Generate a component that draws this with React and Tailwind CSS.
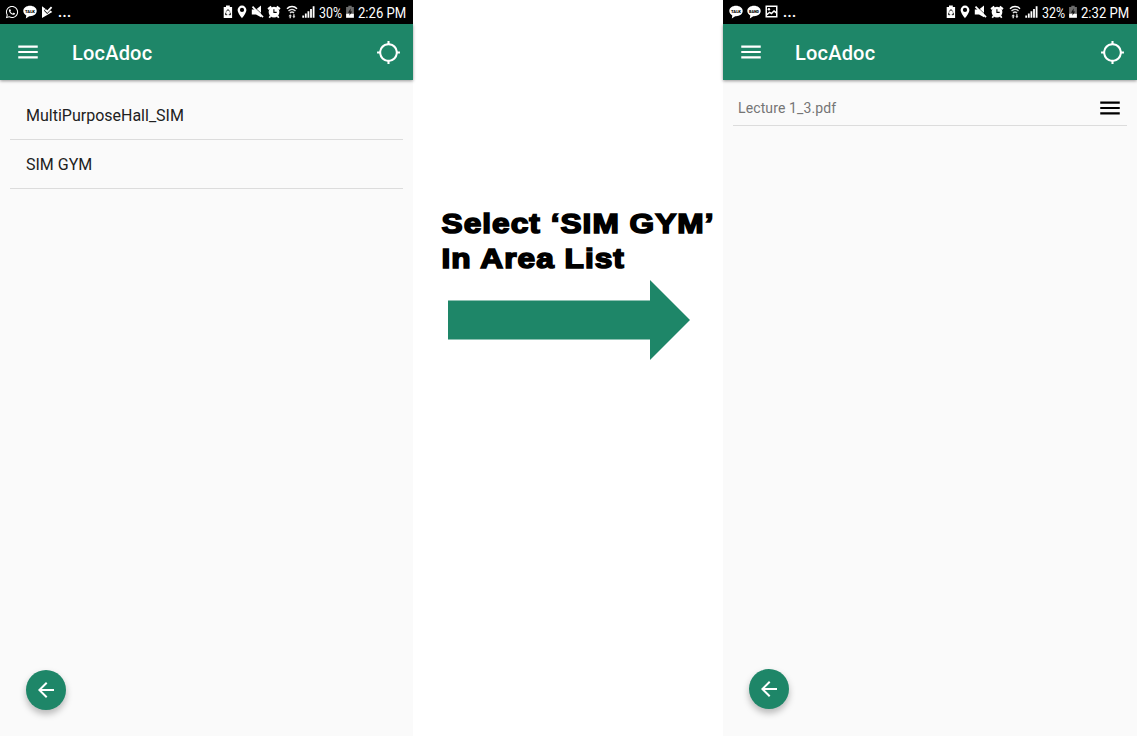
import React from 'react';
import { FaWhatsapp } from 'react-icons/fa';
import { MdGpsNotFixed, MdMenu, MdArrowBack } from 'react-icons/md';

function ChatBubble({ label }) {
  return (
    <svg className="h-[14px] w-[14px] shrink-0" viewBox="0 0 14 14">
      <path d="M7 .8C3.3.8.3 3 .3 6c0 1.9 1.2 3.5 3 4.4L2.8 13.4 6.2 11.2H7c3.7 0 6.7-2.2 6.7-5.2S10.7.8 7 .8Z" fill="#fff" />
      <text x="7" y="7.8" fontSize="4.4" fontWeight="900" textAnchor="middle" textLength="10" lengthAdjust="spacingAndGlyphs" fontFamily="Roboto, sans-serif" fill="#000">
        {label}
      </text>
    </svg>
  );
}

function PlayCheck() {
  return (
    <svg className="h-[14px] w-[12px] shrink-0" viewBox="0 0 12 14">
      <path d="M1 1.300V13L11.300 7 9.400 5.600 6.200 8.900 3 5.800 4.400 3.700Z" fill="#fff" />
      <path d="M4.300 4.700 6.300 6.700 10.600 2.200" fill="none" stroke="#fff" strokeWidth="1.800" />
    </svg>
  );
}

function Picture() {
  return (
    <svg className="h-[14px] w-[13px] shrink-0" viewBox="0 0 13 14">
      <rect x="1.25" y="1.25" width="10.5" height="10.5" fill="none" stroke="#fff" strokeWidth="1.5" />
      <circle cx="3.9" cy="4.200" r="1.200" fill="#fff" />
      <path d="M2 8.600 4.500 6.500l1.900 1L9 5l2 1.500v2L9 7 6.600 9.400 4.600 8.300 2 10.400Z" fill="#fff" />
    </svg>
  );
}

function RecycleBattery() {
  return (
    <svg className="h-[14px] w-[10px] shrink-0" viewBox="0 0 10 14">
      <path d="M3 .6h3.800v1.500h2.300v11H.7V2.100H3Z" fill="#fff" />
      <path d="M3.300 6.500 5 4.500l1.700 2M2.900 7.600 2.500 9.700H4.200M7.100 7.600l.4 2.100H5.800" fill="none" stroke="#000" strokeWidth=".9" />
    </svg>
  );
}

function Pin() {
  return (
    <svg className="h-[14px] w-[10px] shrink-0" viewBox="0 0 10 14">
      <path fillRule="evenodd" d="M5 .6A4.400 4.400 0 0 0 .6 5C.6 8 5 13.200 5 13.200S9.400 8 9.400 5A4.400 4.400 0 0 0 5 .6Zm0 2.200a2.100 2.100 0 1 1 0 4.200 2.100 2.100 0 0 1 0-4.200Z" fill="#fff" />
    </svg>
  );
}

function Mute() {
  return (
    <svg className="h-[14px] w-[14px] shrink-0" viewBox="0 0 14 14">
      <path d="M.8 4.400H5L10 .6V12.300L5 9.400H.8Z" fill="#fff" />
      <path d="M2.700 1.600 13 11.200" stroke="#000" strokeWidth=".9" />
      <path d="M1.500 1.700 12 12.200" stroke="#fff" strokeWidth="1.700" />
    </svg>
  );
}

function Alarm() {
  return (
    <svg className="h-[14px] w-[14px] shrink-0" viewBox="0 0 14 14">
      <circle cx="7" cy="7.100" r="5.400" fill="#fff" />
      <path d="M1.100 4.200 4.300 1.700M12.900 4.200 9.700 1.700" stroke="#fff" strokeWidth="2.200" />
      <path d="M3.500 11 2.300 12.700M10.500 11l1.200 1.700" stroke="#fff" strokeWidth="1.700" />
      <path d="M6.900 4.300v3.100h2.800" fill="none" stroke="#000" strokeWidth="1.100" />
    </svg>
  );
}

function Wifi() {
  return (
    <svg className="h-[14px] w-[12px] shrink-0" viewBox="0 0 12 14">
      <path d="M1 3.700C3.800.8 8.200.8 11 3.700" fill="none" stroke="#fff" strokeWidth="1.500" />
      <path d="M2.500 5.900C4.500 3.900 7.500 3.900 9.500 5.900M4 7.900c1.200-1.200 2.800-1.200 4 0" fill="none" stroke="#ddd" strokeWidth="1.400" />
      <path d="M2.400 11.300 4.200 9.200l1.800 2.100H4.900v2H3.500v-2ZM6.400 11.300h.8V9.200h1.400v2.100h.8L7.900 13.300Z" fill="#ddd" />
    </svg>
  );
}

function Signal() {
  return (
    <svg className="h-[14px] w-[13px] shrink-0" viewBox="0 0 13 14">
      <path d="M.3 10.500h1.800v2.300H.3ZM2.900 8.600h1.800v4.200H2.900ZM5.500 6.300h1.800v6.500H5.500ZM8.100 3.900h1.800v8.900H8.100ZM10.700 1.300h1.800v11.500h-1.800Z" fill="#fff" />
    </svg>
  );
}

function ChargingBattery() {
  return (
    <svg className="h-[14px] w-[8px] shrink-0" viewBox="0 0 8 14">
      <path d="M2.300.8h3.400v1.300h2.200v7H.1v-7h2.200Z" fill="#6b6b6b" />
      <path d="M.1 8.800h7.800v4H.1Z" fill="#fff" />
      <path d="M4.700 3.200 2 7.800h1.700L3.300 10.800 6.200 6.500H4.500Z" fill="#111" />
    </svg>
  );
}

function StatusBar({ notifications, battery, time, side }) {
  return (
    <div className={`flex h-[24px] items-center justify-between bg-black text-[14px] leading-none text-white ${side === 'left' ? 'pl-[5px] pr-[6px]' : 'pl-[6px] pr-[7.5px]'}`}>
      <div className="flex items-center gap-[4px]">
        {notifications}
        <span className="ml-px font-bold tracking-[0.5px]">...</span>
      </div>
      <div className="flex items-center">
        <RecycleBattery />
        <span className="ml-[4px]"><Pin /></span>
        <span className="ml-[4px]"><Mute /></span>
        <span className="ml-[2px]"><Alarm /></span>
        <span className="ml-[5px]"><Wifi /></span>
        <span className="ml-[4px]"><Signal /></span>
        <span className="ml-[4px] w-[24px] origin-left scale-x-[0.89] whitespace-nowrap pt-px">{battery}</span>
        <span className="ml-[3px]"><ChargingBattery /></span>
        <span className="ml-[4px] w-[49px] origin-left scale-x-[0.935] whitespace-nowrap pt-px">{time}</span>
      </div>
    </div>
  );
}

function AppBar() {
  return (
    <header className="flex h-[56px] items-center bg-[#1e8668] pl-[15px] pr-[12px] text-white shadow-[0_1px_3px_rgba(0,0,0,0.4)]">
      <MdMenu className="h-[26px] w-[26px]" />
      <h1 className="ml-[31px] grow pt-[2px] text-[20px] font-medium leading-none tracking-[0.2px]">LocAdoc</h1>
      <MdGpsNotFixed className="h-[25px] w-[25px]" />
    </header>
  );
}

function BackButton() {
  return (
    <button className="flex h-[40px] w-[40px] items-center justify-center rounded-full bg-[#1e8668] text-white shadow-[0_4px_7px_rgba(0,0,0,0.27)]">
      <MdArrowBack className="h-[24px] w-[24px]" />
    </button>
  );
}

export default function App() {
  return (
    <div className="flex h-[736px] w-[1137px] overflow-hidden bg-white font-[Roboto,sans-serif]">
      <section className="flex w-[413px] flex-col bg-[#fafafa]">
        <StatusBar
          side="left"
          battery="30%"
          time="2:26 PM"
          notifications={<><FaWhatsapp className="h-[14px] w-[14px]" /><ChatBubble label="TALK" /><PlayCheck /></>}
        />
        <AppBar />
        <ul className="grow px-[10px] pt-[10px] text-[16px] text-[#212121]">
          <li className="flex h-[50px] items-center border-b border-[#dcdcdc] px-4 pt-[2px]">MultiPurposeHall_SIM</li>
          <li className="flex h-[49px] items-center border-b border-[#dcdcdc] px-4 pt-[2px]">SIM GYM</li>
        </ul>
        <div className="pb-[26px] pl-[26px]"><BackButton /></div>
      </section>

      <main className="flex w-[310px] flex-col pl-[28px] pt-[206px]">
        <p className="origin-left scale-x-[1.13] whitespace-nowrap pl-[0.5px] font-['Liberation_Sans',Arial,sans-serif] text-[28px] font-bold leading-[35px] tracking-[0.9px] text-black [-webkit-text-stroke:1.6px_black]">
          Select ‘SIM GYM’<br />In Area List
        </p>
        <svg className="ml-[7px] mt-[4px] h-[80px] w-[242px]" viewBox="0 0 242 80">
          <path d="M0 20.500H202V0L242 40 202 80V59.500H0Z" fill="#1e8668" />
        </svg>
      </main>

      <section className="flex w-[414px] flex-col bg-[#fafafa]">
        <StatusBar
          side="right"
          battery="32%"
          time="2:32 PM"
          notifications={<><ChatBubble label="TALK" /><ChatBubble label="BAND" /><Picture /></>}
        />
        <AppBar />
        <ul className="grow px-[10px] pt-[10px] text-[14px] text-[#757575]">
          <li className="flex h-[36px] items-center justify-between border-b border-[#dcdcdc] pl-[5px] pr-[4px]">
            <span className="pt-[2px] tracking-[0.12px]">Lecture 1_3.pdf</span>
            <MdMenu className="h-[26px] w-[26px] text-black" />
          </li>
        </ul>
        <div className="pb-[27px] pl-[26px]"><BackButton /></div>
      </section>
    </div>
  );
}
